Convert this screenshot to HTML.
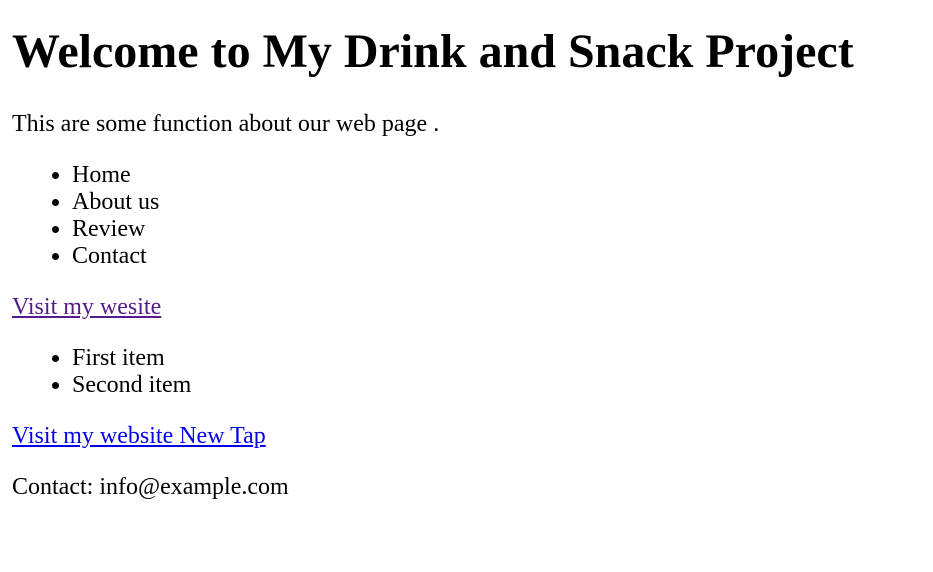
<!DOCTYPE html>
<html><head><meta charset="utf-8"><style>
html,body{background:#fff}
body{margin:12px;font-family:"Liberation Serif",serif;font-size:24px;color:#000}
h1{font-size:48px;margin:24px 0 32px;font-weight:bold}
p{margin:24px 0}
ul{margin:24px 0;padding-left:60px}
a{text-decoration:underline}
a.v{color:#551a8b}
a.n{color:#0000ee}
</style></head><body>
<h1>Welcome to My Drink and Snack Project</h1>
<p>This are some function about our web page .</p>
<ul><li>Home</li><li>About us</li><li>Review</li><li>Contact</li></ul>
<p><a class="v">Visit my wesite</a></p>
<ul><li>First item</li><li>Second item</li></ul>
<p><a class="n">Visit my website New Tap</a></p>
<p>Contact: info@example.com</p>
</body></html>
